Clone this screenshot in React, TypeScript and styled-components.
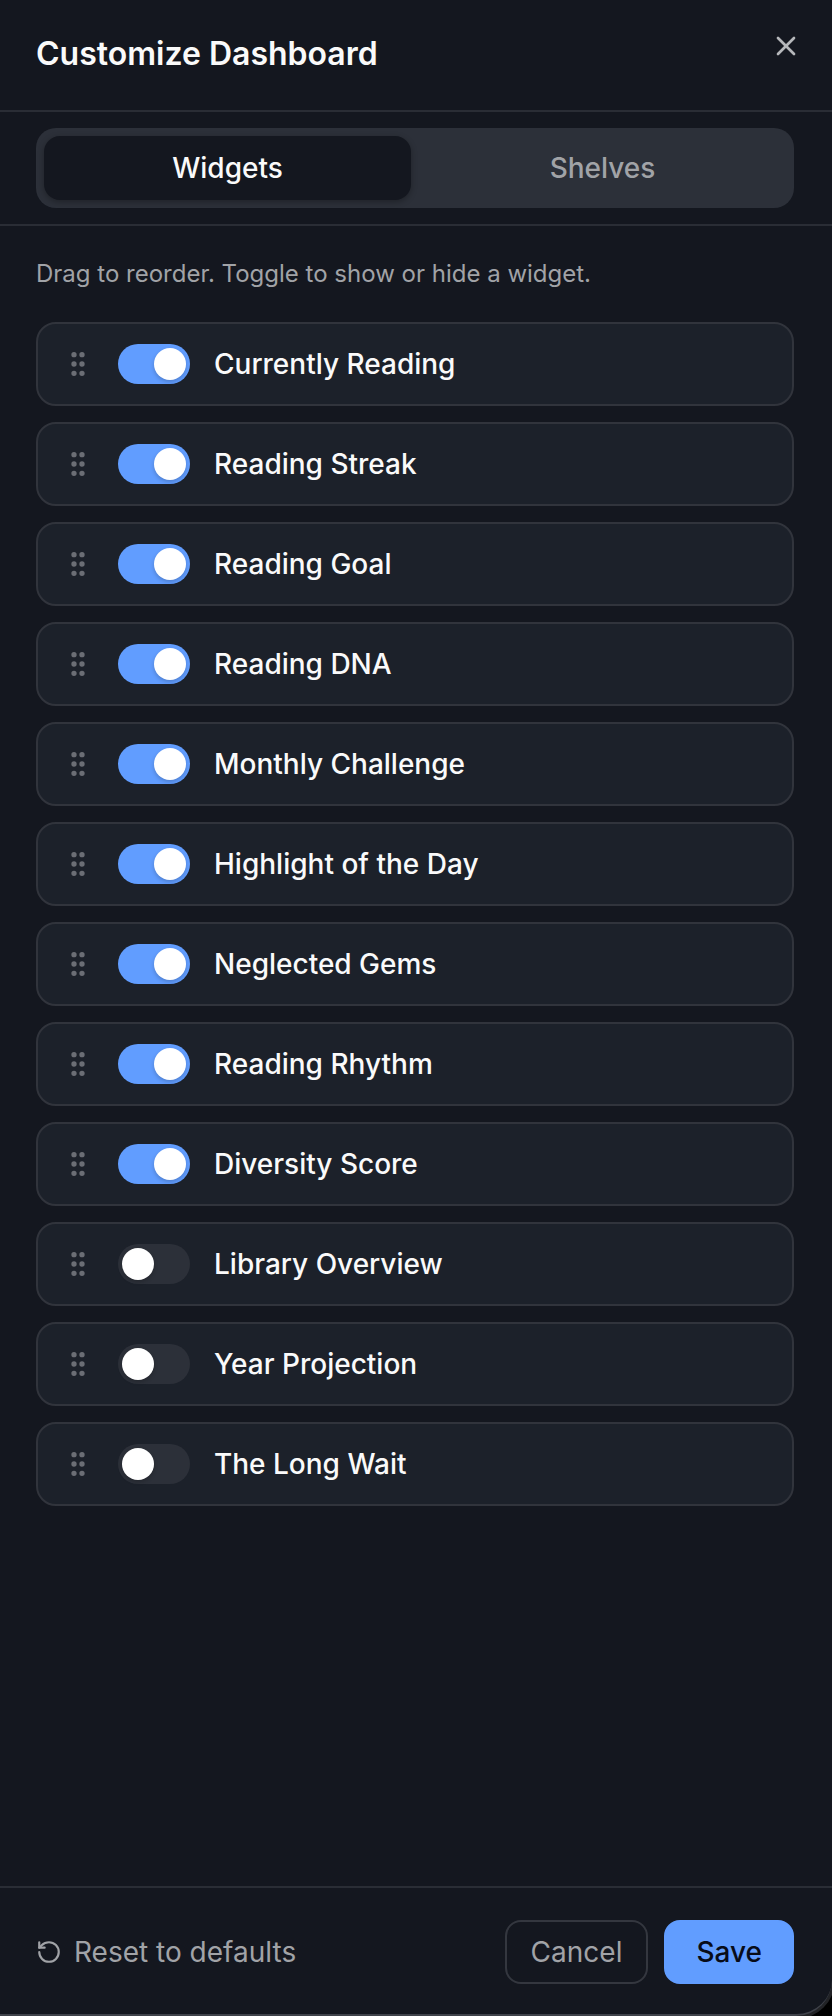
import React, { useState } from "react";
import styled, { createGlobalStyle } from "styled-components";
import { GripVertical, RotateCcw, X } from "lucide-react";

const GlobalStyle = createGlobalStyle`
  *, *::before, *::after { box-sizing: border-box; }
  body {
    margin: 0;
    background: #000;
    color: #fafafa;
    font-family: Inter, "Liberation Sans", sans-serif;
  }
  button { font: inherit; cursor: pointer; }
`;

const Backdrop = styled.div`
  background: #000;
`;

const Panel = styled.main`
  display: flex;
  flex-direction: column;
  min-height: 100vh;
  background: #14171f;
  border-bottom: 2px solid #3f424a;
  border-bottom-right-radius: 36px;
  box-shadow: 0 0 0 3px #222326;
`;

const Header = styled.header`
  display: flex;
  align-items: flex-start;
  justify-content: space-between;
  padding: 30px 30px 32px 36px;
  border-bottom: 2px solid #2a2d35;
`;

const Title = styled.h1`
  margin: 0;
  font-size: 32px;
  line-height: 48px;
  font-weight: 600;
`;

const CloseButton = styled.button`
  display: flex;
  padding: 0;
  border: 0;
  background: none;
  color: #b6b8bb;
`;

const TabBar = styled.div`
  padding: 16px 38px 16px 36px;
  border-bottom: 2px solid #2a2d35;
`;

const TabList = styled.div`
  display: flex;
  gap: 8px;
  padding: 8px;
  border-radius: 20px;
  background: #2c3039;
`;

const Tab = styled.button<{ $active: boolean }>`
  flex: 1;
  padding: 12px;
  border: 0;
  border-radius: 16px;
  background: ${(p) => (p.$active ? "#14171f" : "transparent")};
  box-shadow: ${(p) => (p.$active ? "0 2px 6px rgba(0, 0, 0, 0.3)" : "none")};
  color: ${(p) => (p.$active ? "#fafafa" : "#a1a3a7")};
  font-size: 28px;
  line-height: 40px;
  font-weight: 500;
`;

const Content = styled.section`
  flex: 1;
  padding: 32px 38px 32px 36px;
`;

const Hint = styled.p`
  margin: 0 0 32px;
  color: #a1a3a7;
  font-size: 24px;
  line-height: 32px;
`;

const WidgetList = styled.ul`
  display: flex;
  flex-direction: column;
  gap: 16px;
  margin: 0;
  padding: 0;
  list-style: none;
`;

const WidgetRow = styled.li`
  display: flex;
  align-items: center;
  gap: 24px;
  padding: 20px 24px;
  border: 2px solid #31343c;
  border-radius: 20px;
  background: #1c212a;
`;

const DragHandle = styled.button`
  display: flex;
  padding: 0;
  border: 0;
  background: none;
  color: #6b6e75;
  cursor: grab;
`;

const ToggleLabel = styled.label`
  display: flex;
  flex: 1;
  align-items: center;
  gap: 24px;
  font-size: 28px;
  line-height: 40px;
  font-weight: 500;
  cursor: pointer;
`;

const Toggle = styled.input`
  display: flex;
  appearance: none;
  width: 72px;
  height: 40px;
  margin: 0;
  padding: 4px;
  border-radius: 20px;
  background: #2c3039;
  cursor: pointer;

  &::before {
    content: "";
    width: 32px;
    height: 32px;
    border-radius: 50%;
    background: #fff;
    box-shadow: 0 2px 4px rgba(0, 0, 0, 0.2);
  }

  &:checked {
    justify-content: flex-end;
    background: #619dff;
  }
`;

const Footer = styled.footer`
  display: flex;
  align-items: center;
  justify-content: space-between;
  padding: 32px 38px 30px 36px;
  border-top: 2px solid #2a2d35;
`;

const ResetButton = styled.button`
  display: flex;
  align-items: center;
  gap: 12px;
  padding: 0;
  border: 0;
  background: none;
  color: #a1a3a7;
  font-size: 28px;
  line-height: 40px;
`;

const Actions = styled.div`
  display: flex;
  gap: 16px;
`;

const ActionButton = styled.button<{ $primary?: boolean }>`
  padding: 10px ${(p) => (p.$primary ? 30 : 24)}px;
  border: 2px solid ${(p) => (p.$primary ? "#619dff" : "#34373f")};
  border-radius: 16px;
  background: ${(p) => (p.$primary ? "#619dff" : "transparent")};
  color: ${(p) => (p.$primary ? "#080c18" : "#a1a3a7")};
  font-size: 28px;
  line-height: 40px;
  font-weight: ${(p) => (p.$primary ? 500 : 400)};
`;

const initialWidgets = [
  { name: "Currently Reading", visible: true },
  { name: "Reading Streak", visible: true },
  { name: "Reading Goal", visible: true },
  { name: "Reading DNA", visible: true },
  { name: "Monthly Challenge", visible: true },
  { name: "Highlight of the Day", visible: true },
  { name: "Neglected Gems", visible: true },
  { name: "Reading Rhythm", visible: true },
  { name: "Diversity Score", visible: true },
  { name: "Library Overview", visible: false },
  { name: "Year Projection", visible: false },
  { name: "The Long Wait", visible: false },
];

const tabs = ["Widgets", "Shelves"];

export default function App() {
  const [widgets, setWidgets] = useState(initialWidgets);
  const [activeTab, setActiveTab] = useState("Widgets");

  const toggleWidget = (name: string) =>
    setWidgets((list) =>
      list.map((w) => (w.name === name ? { ...w, visible: !w.visible } : w))
    );

  return (
    <Backdrop>
      <GlobalStyle />
      <Panel>
        <Header>
          <Title>Customize Dashboard</Title>
          <CloseButton type="button" aria-label="Close">
            <X size={32} />
          </CloseButton>
        </Header>
        <TabBar>
          <TabList role="tablist">
            {tabs.map((tab) => (
              <Tab
                key={tab}
                type="button"
                role="tab"
                aria-selected={tab === activeTab}
                $active={tab === activeTab}
                onClick={() => setActiveTab(tab)}
              >
                {tab}
              </Tab>
            ))}
          </TabList>
        </TabBar>
        <Content>
          <Hint>Drag to reorder. Toggle to show or hide a widget.</Hint>
          <WidgetList>
            {widgets.map((w) => (
              <WidgetRow key={w.name}>
                <DragHandle type="button" aria-label={`Reorder ${w.name}`}>
                  <GripVertical size={32} />
                </DragHandle>
                <ToggleLabel>
                  <Toggle
                    type="checkbox"
                    role="switch"
                    checked={w.visible}
                    onChange={() => toggleWidget(w.name)}
                  />
                  {w.name}
                </ToggleLabel>
              </WidgetRow>
            ))}
          </WidgetList>
        </Content>
        <Footer>
          <ResetButton type="button" onClick={() => setWidgets(initialWidgets)}>
            <RotateCcw size={26} />
            Reset to defaults
          </ResetButton>
          <Actions>
            <ActionButton type="button">Cancel</ActionButton>
            <ActionButton type="button" $primary>
              Save
            </ActionButton>
          </Actions>
        </Footer>
      </Panel>
    </Backdrop>
  );
}
